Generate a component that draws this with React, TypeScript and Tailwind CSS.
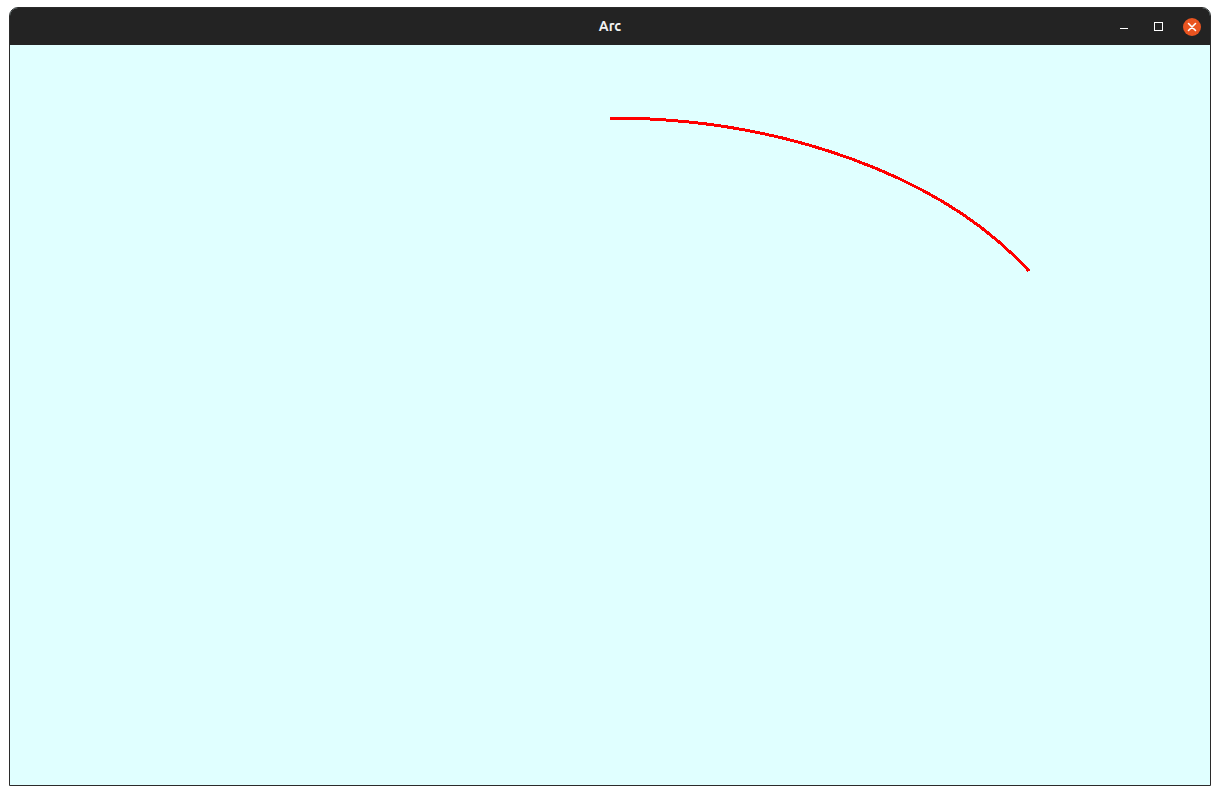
export default function App() {
  return (
    <div className="h-[795px] w-[1220px] bg-white pl-[9px] pt-[7px] font-['Ubuntu','Open_Sans','Noto_Sans',sans-serif]">
      <div className="flex h-[779px] w-[1202px] flex-col overflow-hidden rounded-t-[9px] border border-[#2b2b2b] bg-[#e0ffff]">
        {/* title bar */}
        <div className="relative flex h-[37px] shrink-0 items-center justify-center bg-[#232323]">
          <span className="text-[14px] font-bold text-[#f2f2f2]">Arc</span>
          <div className="absolute right-[1px] top-0 flex h-full items-center">
            <div className="flex w-[34px] items-center justify-center pt-[4px]">
              <div className="h-[1px] w-[8px] bg-white" />
            </div>
            <div className="flex w-[34px] items-center justify-center">
              <div className="h-[9px] w-[9px] border border-white" />
            </div>
            <div className="flex w-[34px] items-center justify-center">
              <div className="flex h-[18px] w-[18px] items-center justify-center rounded-full bg-[#e95420]">
                <svg width="10" height="10" viewBox="0 0 10 10">
                  <path d="M1.5 1.5 L8.5 8.5 M8.5 1.5 L1.5 8.5" stroke="white" strokeWidth="1.6" strokeLinecap="round" />
                </svg>
              </div>
            </div>
          </div>
        </div>
        {/* canvas */}
        <div className="relative flex-1">
          <svg width="1200" height="740" viewBox="0 0 1200 740" className="block">
            <path
              d="M 600 73 A 484 306 0 0 1 1019 226"
              fill="none"
              stroke="#ff0000"
              strokeWidth="3"
              shapeRendering="crispEdges"
            />
          </svg>
        </div>
      </div>
    </div>
  );
}
